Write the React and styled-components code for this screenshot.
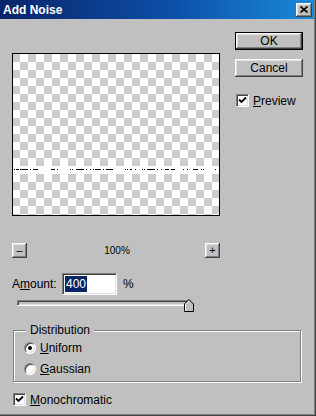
import React from "react";
import styled, { createGlobalStyle } from "styled-components";

const Global = createGlobalStyle`
  html, body { margin: 0; padding: 0; background: #c0c0c0; }
  * { box-sizing: border-box; }
`;

const Window = styled.div`
  width: 316px;
  height: 416px;
  background: #c0c0c0;
  font-family: "Liberation Sans", Arial, sans-serif;
  font-size: 12px;
  color: #000;
  box-shadow: inset -1px -1px #404040, inset -2px -2px #808080;
  display: flex;
  flex-direction: column;
`;

const TitleBar = styled.div`
  height: 19px;
  margin-right: 2px;
  padding-left: 3px;
  background: linear-gradient(90deg, #0a246a 0%, #0c50a8 55%, #1a8ad8 100%);
  display: flex;
  align-items: center;
  justify-content: space-between;
`;

const TitleText = styled.span`
  color: #fff;
  font-weight: bold;
  font-size: 12px;
`;

const raised = `
  background: #c0c0c0;
  box-shadow: inset -1px -1px #404040, inset 1px 1px #fff, inset -2px -2px #808080, inset 2px 2px #dfdfdf;
`;

const CloseButton = styled.div`
  ${raised}
  width: 16px;
  height: 14px;
  margin-right: 2px;
  display: flex;
  align-items: center;
  justify-content: center;
  padding: 0 1px 1px 0;
`;

const Content = styled.div`
  padding-left: 12px;
  display: flex;
  flex-direction: column;
`;

const TopRow = styled.div`
  display: flex;
  align-items: flex-start;
`;

const LeftCol = styled.div`
  width: 208px;
  margin-top: 34px;
  display: flex;
  flex-direction: column;
`;

const Preview = styled.div`
  width: 208px;
  height: 163px;
  border: 1px solid #000;
  background-color: #fff;
  background-image:
    linear-gradient(45deg, #cccccc 25%, transparent 25%, transparent 75%, #cccccc 75%),
    linear-gradient(45deg, #cccccc 25%, transparent 25%, transparent 75%, #cccccc 75%);
  background-size: 16px 16px;
  background-position: 7px 0, 15px 8px;
  display: flex;
  flex-direction: column;
`;

const NoiseStrip = styled.div`
  margin-top: 112px;
  height: 8px;
  background: #fff;
  display: flex;
  align-items: center;
`;

const ZoomRow = styled.div`
  margin-top: 27px;
  height: 15px;
  display: flex;
  align-items: center;
  justify-content: space-between;
`;

const SmallButton = styled.div`
  ${raised}
  width: 15px;
  height: 15px;
  display: flex;
  align-items: center;
  justify-content: center;
  font-size: 11px;
  line-height: 1;
  padding-bottom: 1px;
`;

const ZoomLabel = styled.span`
  font-size: 10px;
  margin-left: 2px;
`;

const AmountRow = styled.div`
  margin-top: 15px;
  height: 21px;
  display: flex;
  align-items: center;
`;

const Label = styled.span`
  width: ${(p) => p.w || "auto"};
  margin-left: ${(p) => p.ml || "0"};
`;

const Key = styled.u`
  text-decoration: underline;
  text-underline-offset: 1px;
`;

const TextInput = styled.div`
  width: 55px;
  height: 22px;
  background: #fff;
  border: 1px solid;
  border-color: #808080 #fff #fff #808080;
  box-shadow: inset 1px 1px #404040, inset -1px -1px #dfdfdf;
  padding: 2px 2px;
  display: flex;
  align-items: stretch;
`;

const Selected = styled.span`
  background: #0a246a;
  color: #fff;
  padding: 0 1px;
  display: flex;
  align-items: center;
`;

const SliderWrap = styled.div`
  margin-top: 5px;
  height: 14px;
  padding-left: 5px;
  display: flex;
  align-items: flex-start;
`;

const Track = styled.div`
  width: 172px;
  height: 6px;
  margin-top: 1px;
  border: 1px solid;
  border-color: #808080 #fff #fff #808080;
  box-shadow: inset 1px 1px #404040, inset -1px -1px #dfdfdf;
  background: #c0c0c0;
`;

const Thumb = styled.svg`
  margin-left: -5px;
  flex: none;
`;

const RightCol = styled.div`
  margin-left: 15px;
  margin-top: 13px;
  display: flex;
  flex-direction: column;
`;

const Button = styled.div`
  ${raised}
  width: 68px;
  height: 18px;
  margin-top: ${(p) => p.mt || "0"};
  display: flex;
  align-items: center;
  justify-content: center;
  ${(p) =>
    p.primary &&
    `box-shadow: inset 0 0 0 1px #000, inset -2px -2px #404040, inset 2px 2px #fff, inset -3px -3px #808080, inset 3px 3px #dfdfdf;`}
`;

const CheckRow = styled.label`
  display: flex;
  align-items: center;
  gap: 4px;
  margin-top: ${(p) => p.mt || "0"};
  margin-left: ${(p) => p.ml || "0"};
  height: 13px;
`;

const Box = styled.span`
  width: 13px;
  height: 13px;
  flex: none;
  background: #fff;
  border: 1px solid;
  border-color: #808080 #fff #fff #808080;
  box-shadow: inset 1px 1px #404040, inset -1px -1px #dfdfdf;
  display: flex;
  align-items: center;
  justify-content: center;
`;

const Group = styled.fieldset`
  margin: 10px 0 0 1px;
  width: 288px;
  height: 59px;
  padding: 5px 0 0 10px;
  border: 1px solid #808080;
  box-shadow: inset 1px 1px #fff, 1px 1px #fff;
  display: flex;
  flex-direction: column;
  gap: 9px;
`;

const Legend = styled.legend`
  margin-left: 2px;
  padding: 0 4px 0 4px;
  background: #c0c0c0;
  position: relative;
  line-height: 14px;
`;

const RadioRow = styled.label`
  display: flex;
  align-items: center;
  gap: 4px;
  height: 12px;
`;

const Radio = styled.span`
  width: 12px;
  height: 12px;
  border-radius: 50%;
  background: #fff;
  border: 1px solid;
  border-color: #808080 #fff #fff #808080;
  box-shadow: inset 1px 1px #404040, inset -1px -1px #dfdfdf;
  display: flex;
  align-items: center;
  justify-content: center;
  &::after {
    content: "";
    width: 4px;
    height: 4px;
    border-radius: 50%;
    background: ${(p) => (p.checked ? "#000" : "transparent")};
  }
`;

const Check = () => (
  <svg width="9" height="9" viewBox="0 0 9 9">
    <path d="M1 3.5 L3.5 6 L8 1.5" fill="none" stroke="#000" strokeWidth="1.8" />
  </svg>
);

const dashes = (() => {
  const out = [];
  let seed = 11;
  const rnd = () => {
    seed = (seed * 9301 + 49297) % 233280;
    return seed / 233280;
  };
  let x = 1;
  while (x < 204) {
    const w = rnd() < 0.4 ? 2 + Math.floor(rnd() * 8) : 1;
    if (rnd() > 0.2) out.push([x, w]);
    x += w + 1 + Math.floor(rnd() * 3);
  }
  return out;
})();

export default function App() {
  return (
    <Window>
      <Global />
      <TitleBar>
        <TitleText>Add Noise</TitleText>
        <CloseButton>
          <svg width="8" height="7" viewBox="0 0 8 7">
            <path d="M0.5 0.5 L7.5 6.5 M7.5 0.5 L0.5 6.5" stroke="#000" strokeWidth="1.6" />
          </svg>
        </CloseButton>
      </TitleBar>
      <Content>
        <TopRow>
          <LeftCol>
            <Preview>
              <NoiseStrip>
                <svg width="206" height="2" viewBox="0 0 206 2">
                  {dashes.map(([x, w], i) => (
                    <rect key={i} x={x} y="0" width={w} height="1" fill="#000" />
                  ))}
                </svg>
              </NoiseStrip>
            </Preview>
            <ZoomRow>
              <SmallButton>–</SmallButton>
              <ZoomLabel>100%</ZoomLabel>
              <SmallButton>+</SmallButton>
            </ZoomRow>
            <AmountRow>
              <Label w="50px">
                A<Key>m</Key>ount:
              </Label>
              <TextInput>
                <Selected>400</Selected>
              </TextInput>
              <Label ml="6px">%</Label>
            </AmountRow>
            <SliderWrap>
              <Track />
              <Thumb width="10" height="13" viewBox="0 0 10 13">
                <polygon points="5,0.5 9.5,5 9.5,12.5 0.5,12.5 0.5,5" fill="#c0c0c0" stroke="#000" />
                <polyline points="1.5,12 1.5,5.5 5,2" fill="none" stroke="#fff" />
              </Thumb>
            </SliderWrap>
          </LeftCol>
          <RightCol>
            <Button primary>OK</Button>
            <Button mt="9px">Cancel</Button>
            <CheckRow mt="17px" ml="1px">
              <Box>
                <Check />
              </Box>
              <span>
                <Key>P</Key>review
              </span>
            </CheckRow>
          </RightCol>
        </TopRow>
        <Group>
          <Legend>Distribution</Legend>
          <RadioRow>
            <Radio checked />
            <span>
              <Key>U</Key>niform
            </span>
          </RadioRow>
          <RadioRow>
            <Radio />
            <span>
              <Key>G</Key>aussian
            </span>
          </RadioRow>
        </Group>
        <CheckRow mt="11px" ml="1px">
          <Box>
            <Check />
          </Box>
          <span>
            <Key>M</Key>onochromatic
          </span>
        </CheckRow>
      </Content>
    </Window>
  );
}
